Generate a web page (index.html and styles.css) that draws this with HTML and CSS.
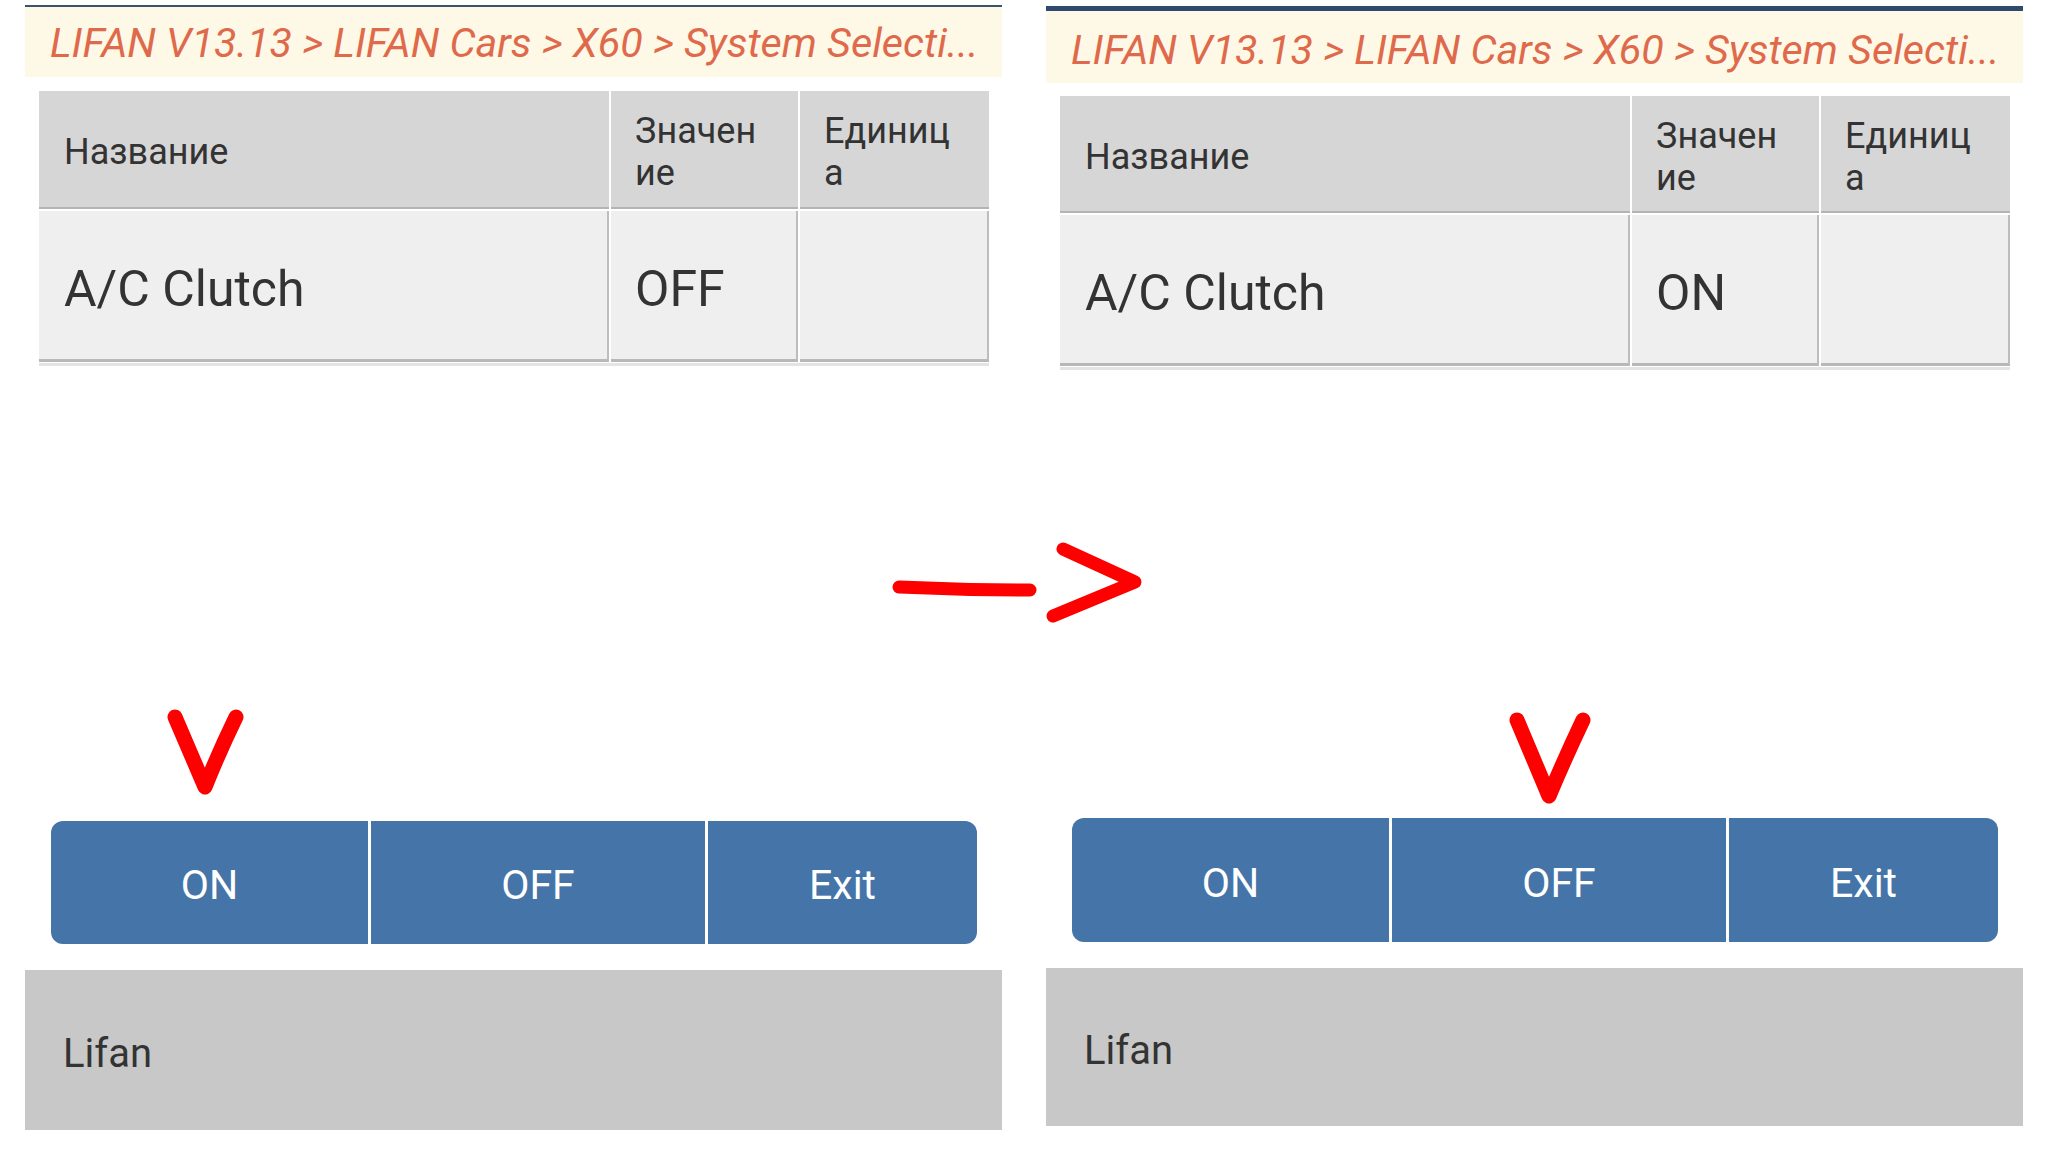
FILE: index.html
```html
<!DOCTYPE html>
<html lang="ru">
<head>
<meta charset="utf-8">
<title>LIFAN A/C Clutch</title>
<link rel="stylesheet" href="styles.css">
</head>
<body>
<div class="page">
  <div class="panel panel-left">
    <div class="topline"></div>
    <div class="crumb">LIFAN V13.13 &gt; LIFAN Cars &gt; X60 &gt; System Selecti...</div>
    <div class="table">
      <div class="hcell c1"><span>Название</span></div>
      <div class="hcell c2"><span>Значен<br>ие</span></div>
      <div class="hcell c3"><span>Единиц<br>а</span></div>
      <div class="dcell c1">A/C Clutch</div>
      <div class="dcell c2">OFF</div>
      <div class="dcell c3"></div>
    </div>
    <div class="underline"></div>
    <div class="buttons">
      <div class="btn b1">ON</div>
      <div class="btn b2">OFF</div>
      <div class="btn b3">Exit</div>
    </div>
    <div class="footer">Lifan</div>
  </div>
  <div class="panel panel-right">
    <div class="topline"></div>
    <div class="crumb">LIFAN V13.13 &gt; LIFAN Cars &gt; X60 &gt; System Selecti...</div>
    <div class="table">
      <div class="hcell c1"><span>Название</span></div>
      <div class="hcell c2"><span>Значен<br>ие</span></div>
      <div class="hcell c3"><span>Единиц<br>а</span></div>
      <div class="dcell c1">A/C Clutch</div>
      <div class="dcell c2">ON</div>
      <div class="dcell c3"></div>
    </div>
    <div class="underline"></div>
    <div class="buttons">
      <div class="btn b1">ON</div>
      <div class="btn b2">OFF</div>
      <div class="btn b3">Exit</div>
    </div>
    <div class="footer">Lifan</div>
  </div>
  <svg class="marks" width="2048" height="1151" viewBox="0 0 2048 1151" xmlns="http://www.w3.org/2000/svg">
    <g fill="none" stroke="#ff0000" stroke-linecap="round" stroke-linejoin="round">
      <path d="M175 717 Q190 752 205 787 Q219 752 236 717" stroke-width="15"/>
      <path d="M1517 720 Q1533 758 1549 796 Q1565 758 1583 720" stroke-width="15"/>
      <path d="M899 587 Q965 590 1030 590" stroke-width="13"/>
      <path d="M1063 549 L1135 582 L1053 616" stroke-width="13"/>
    </g>
  </svg>
</div>
</body>
</html>
```

FILE: styles.css
```css
html, body {
  margin: 0;
  padding: 0;
  background: #ffffff;
}

.page {
  position: relative;
  width: 2048px;
  height: 1151px;
  display: flex;
  gap: 44px;
  padding-left: 25px;
  box-sizing: border-box;
  font-family: Roboto, "Noto Sans", "DejaVu Sans", sans-serif;
  color: #333333;
  overflow: hidden;
}

.panel {
  width: 977px;
  display: flex;
  flex-direction: column;
}

.topline {
  margin-top: 5px;
  height: 2px;
  background: #3c5370;
}

.crumb {
  height: 70px;
  line-height: 72px;
  background: #fef8e7;
  color: #df6a4b;
  font-style: italic;
  font-size: 41.3px;
  padding-left: 25px;
  white-space: nowrap;
  overflow: hidden;
}

.table {
  margin: 14px 0 0 14px;
  width: 950px;
  display: grid;
  grid-template-columns: 570px 187px 189px;
  grid-template-rows: 118px 151px;
  column-gap: 2px;
  row-gap: 2px;
}

.hcell {
  background: #d6d6d6;
  border-bottom: 2px solid #b4b4b4;
  display: flex;
  align-items: center;
  padding-left: 25px;
  padding-top: 6px;
  font-size: 36px;
  line-height: 42px;
  color: #333333;
}

.hcell.c2, .hcell.c3 {
  padding-left: 24px;
}

.dcell {
  background: #efefef;
  border-right: 2px solid #bdbdbd;
  border-bottom: 3px solid #b8b8b8;
  display: flex;
  align-items: center;
  padding-left: 25px;
  padding-top: 8px;
  font-size: 50px;
  color: #333333;
}

.dcell.c2 {
  padding-left: 24px;
}

.underline {
  margin: 1px 0 0 14px;
  width: 950px;
  height: 3px;
  background: #e4e4e4;
}

.buttons {
  margin: 455px 0 0 26px;
  width: 926px;
  height: 123px;
  display: flex;
  gap: 3px;
}

.btn {
  background: #4474a8;
  color: #ffffff;
  font-size: 41px;
  display: flex;
  align-items: center;
  justify-content: center;
  padding-top: 5px;
  box-sizing: border-box;
}

.b1 {
  width: 317px;
  border-radius: 12px 0 0 12px;
}

.b2 {
  width: 334px;
}

.b3 {
  flex: 1;
  border-radius: 0 12px 12px 0;
}

.footer {
  margin-top: 26px;
  height: 160px;
  box-sizing: border-box;
  padding-top: 7px;
  background: #c8c8c8;
  font-size: 40px;
  color: #333333;
  display: flex;
  align-items: center;
  padding-left: 38px;
}

.panel-right .topline {
  margin-top: 6px;
  height: 5px;
  background: #2f4a6c;
}

.panel-right .crumb {
  height: 72px;
  line-height: 79px;
}

.panel-right .table {
  margin-top: 13px;
  grid-template-rows: 117px 151px;
}

.panel-right .buttons {
  margin-top: 448px;
  height: 124px;
}

.panel-right .footer {
  height: 158px;
}

.marks {
  position: absolute;
  left: 0;
  top: 0;
  pointer-events: none;
}
```
